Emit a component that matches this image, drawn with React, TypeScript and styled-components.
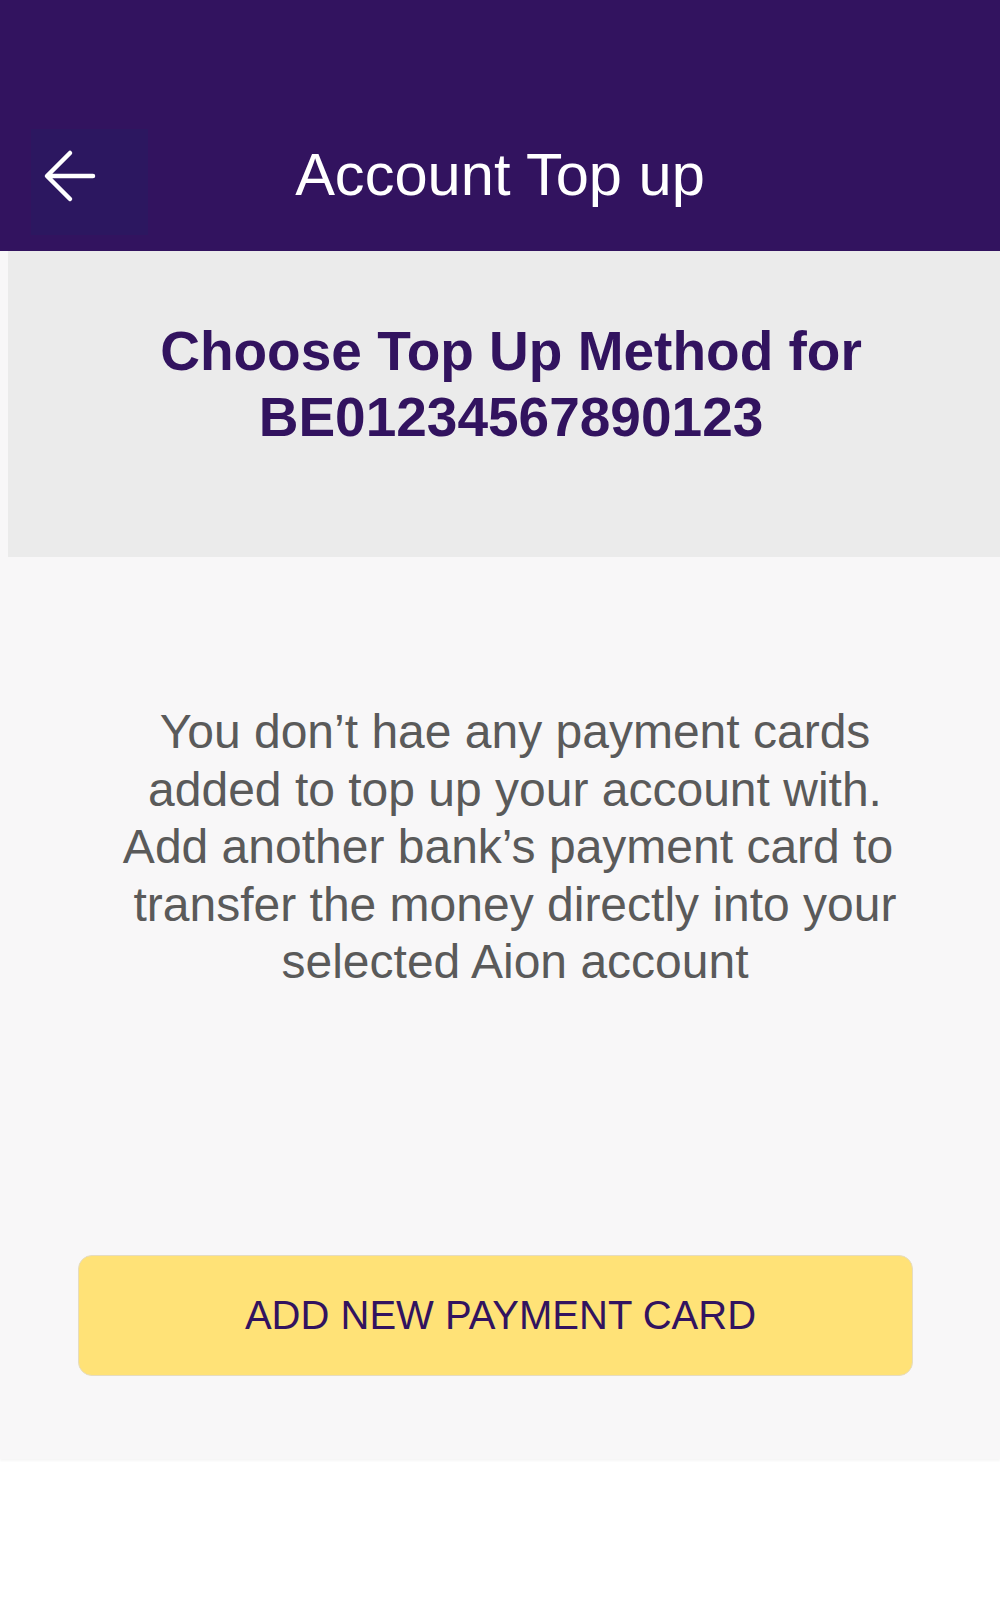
import React from 'react'
import styled, { createGlobalStyle } from 'styled-components'

const GlobalStyle = createGlobalStyle`
  body {
    margin: 0;
    background-color: #ffffff;
    font-family: 'Liberation Sans', Arial, sans-serif;
  }
`

const Page = styled.div`
  width: 1000px;
  min-height: 1600px;
  background-color: #ffffff;
`

const Header = styled.header`
  box-sizing: border-box;
  height: 251px;
  padding-top: 129px;
  background-color: #32135f;
`

const Toolbar = styled.div`
  display: grid;
  grid-template-columns: 1fr auto 1fr;
  height: 106px;
`

const BackButton = styled.button`
  justify-self: start;
  display: flex;
  align-items: center;
  justify-content: center;
  width: 117px;
  height: 106px;
  margin-left: 31px;
  padding: 0;
  border: none;
  background-color: #2c1760;
  cursor: pointer;
`

const Title = styled.h1`
  margin: 16px 0 0;
  font-size: 59.6px;
  line-height: 59px;
  font-weight: 400;
  color: #ffffff;
  white-space: nowrap;
`

const Body = styled.main`
  display: flex;
  flex-direction: column;
  height: 1208px;
  background-color: #f8f7f8;
  box-shadow: 0 2px 2px rgba(0, 0, 0, 0.04);
`

const MethodPanel = styled.section`
  box-sizing: border-box;
  height: 306px;
  margin-left: 8px;
  padding: 67px 0 0 14px;
  background-color: #ebebeb;
`

const Heading = styled.h2`
  margin: 0;
  text-align: center;
  font-size: 55px;
  line-height: 66px;
  font-weight: 700;
  color: #32135f;
`

const Message = styled.p`
  margin: 146px 0 0;
  padding: 0 40px 0 70px;
  text-align: center;
  font-size: 48px;
  line-height: 57.5px;
  color: #5a5a5a;
`

const MessageLine = styled.span<{ $shift?: number }>`
  display: block;
  margin-right: ${p => (p.$shift ?? 0) * 2}px;
`

const AddCardButton = styled.button`
  box-sizing: border-box;
  height: 121px;
  margin: 264px 87px 0 78px;
  padding: 0 0 0 10px;
  border: 1px solid #e6dcc0;
  border-radius: 14px;
  background-color: #ffe277;
  font-family: 'Liberation Sans', Arial, sans-serif;
  font-size: 40px;
  color: #32135f;
  cursor: pointer;
`

const messageLines: { text: string; shift?: number }[] = [
  { text: 'You don’t hae any payment cards' },
  { text: 'added to top up your account with.' },
  { text: 'Add another bank’s payment card to', shift: 7 },
  { text: 'transfer the money directly into your' },
  { text: 'selected Aion account' },
]

function BackArrow() {
  return (
    <svg width="117" height="106" viewBox="31 129 117 106" fill="none">
      <path
        d="M93 176 H48 M70 153 L47 176 L70 199"
        stroke="#ffffff"
        strokeWidth="4.5"
        strokeLinecap="round"
        strokeLinejoin="round"
      />
    </svg>
  )
}

function App() {
  return (
    <Page>
      <GlobalStyle />
      <Header>
        <Toolbar>
          <BackButton aria-label="Back">
            <BackArrow />
          </BackButton>
          <Title>Account Top up</Title>
        </Toolbar>
      </Header>

      <Body>
        <MethodPanel>
          <Heading>
            Choose Top Up Method for
            <br />
            BE01234567890123
          </Heading>
        </MethodPanel>

        <Message>
          {messageLines.map(line => (
            <MessageLine key={line.text} $shift={line.shift}>
              {line.text}
            </MessageLine>
          ))}
        </Message>

        <AddCardButton>ADD NEW PAYMENT CARD</AddCardButton>
      </Body>
    </Page>
  )
}

export default App
